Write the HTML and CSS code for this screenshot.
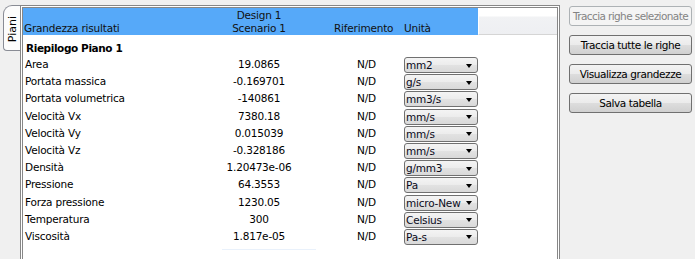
FILE: index.html
```html
<!DOCTYPE html>
<html>
<head>
    <meta charset="utf-8">
    <title>Risultati piani</title>
    <link rel="stylesheet" href="styles.css">
</head>
<body>
    <div class="window">
        <div class="side-tabs">
            <div class="tab"><span>Piani</span></div>
        </div>

        <div class="frame">
            <div class="head">
                <div class="hcell name">Grandezza risultati</div>
                <div class="hcell val">Design 1<br>Scenario 1</div>
                <div class="hcell ref">Riferimento</div>
                <div class="hcell unit">Unità</div>
                <div class="hcell extra"></div>
            </div>

            <div class="group">Riepilogo Piano 1</div>

            <div class="row"><span class="name">Area</span><span class="val">19.0865</span><span class="ref">N/D</span><span class="unit"><span class="combo"><span class="label">mm2</span><i class="arrow"></i></span></span></div>
            <div class="row"><span class="name">Portata massica</span><span class="val">-0.169701</span><span class="ref">N/D</span><span class="unit"><span class="combo"><span class="label">g/s</span><i class="arrow"></i></span></span></div>
            <div class="row"><span class="name">Portata volumetrica</span><span class="val">-140861</span><span class="ref">N/D</span><span class="unit"><span class="combo"><span class="label">mm3/s</span><i class="arrow"></i></span></span></div>
            <div class="row"><span class="name">Velocità Vx</span><span class="val">7380.18</span><span class="ref">N/D</span><span class="unit"><span class="combo"><span class="label">mm/s</span><i class="arrow"></i></span></span></div>
            <div class="row"><span class="name">Velocità Vy</span><span class="val">0.015039</span><span class="ref">N/D</span><span class="unit"><span class="combo"><span class="label">mm/s</span><i class="arrow"></i></span></span></div>
            <div class="row"><span class="name">Velocità Vz</span><span class="val">-0.328186</span><span class="ref">N/D</span><span class="unit"><span class="combo"><span class="label">mm/s</span><i class="arrow"></i></span></span></div>
            <div class="row"><span class="name">Densità</span><span class="val">1.20473e-06</span><span class="ref">N/D</span><span class="unit"><span class="combo"><span class="label">g/mm3</span><i class="arrow"></i></span></span></div>
            <div class="row"><span class="name">Pressione</span><span class="val">64.3553</span><span class="ref">N/D</span><span class="unit"><span class="combo"><span class="label">Pa</span><i class="arrow"></i></span></span></div>
            <div class="row"><span class="name">Forza pressione</span><span class="val">1230.05</span><span class="ref">N/D</span><span class="unit"><span class="combo"><span class="label">micro-New</span><i class="arrow"></i></span></span></div>
            <div class="row"><span class="name">Temperatura</span><span class="val">300</span><span class="ref">N/D</span><span class="unit"><span class="combo"><span class="label">Celsius</span><i class="arrow"></i></span></span></div>
            <div class="row"><span class="name">Viscosità</span><span class="val">1.817e-05</span><span class="ref">N/D</span><span class="unit"><span class="combo"><span class="label">Pa-s</span><i class="arrow"></i></span></span></div>

            <div class="foot-line"></div>
        </div>

        <div class="actions">
            <button class="btn" disabled>Traccia righe selezionate</button>
            <button class="btn">Traccia tutte le righe</button>
            <button class="btn">Visualizza grandezze</button>
            <button class="btn">Salva tabella</button>
        </div>
    </div>
</body>
</html>
```

FILE: styles.css
```css
body {
    margin: 0;
    padding: 0;
    background-color: #f0f0f0;
    font-family: "DejaVu Sans", "Liberation Sans", sans-serif;
    font-size: 10.5px;
    letter-spacing: -0.2px;
    color: #000;
    overflow: hidden;
}
.window {
    display: flex;
    align-items: flex-start;
    padding-top: 5px;
    height: 254px;
}

/* vertical tab on the left */
.side-tabs {
    width: 17px;
    padding-left: 3px;
}
.tab {
    height: 44px;
    margin-top: 0;
    border: 1px solid #898c95;
    border-right: none;
    border-radius: 9px 0 0 4px;
    background: #fcfcfc;
    display: flex;
    justify-content: center;
    align-items: center;
}
.tab span {
    writing-mode: vertical-rl;
    transform: rotate(180deg);
    font-size: 11px;
    letter-spacing: 0;
    padding-bottom: 3px;
}

/* table frame */
.frame {
    width: 534px;
    height: 260px;
    border: 3px double #878787;
    border-bottom: none;
    background: #fff;
}
.head,
.row {
    display: grid;
    grid-template-columns: 197px 78px 102px 78px 79px;
}
.head {
    height: 27px;
}
.hcell {
    background: #56a9f9;
    line-height: 13px;
    padding-top: 1px;
    color: #111;
}
.hcell.name {
    padding-left: 1px;
    padding-top: 14px;
}
.hcell.val {
    text-align: center;
}
.hcell.ref {
    padding-left: 36px;
    padding-top: 14px;
}
.hcell.unit {
    padding-left: 4px;
    padding-top: 14px;
}
.hcell.extra {
    height: 25px;
    border-left: 1px solid #fff;
    border-bottom: 1px solid #d5d5d5;
    background: linear-gradient(#fff 0, #fff 8px, #f1f2f4 9px, #eeeff2 100%);
}

.group {
    margin-top: 6px;
    height: 15px;
    line-height: 15px;
    padding-left: 3px;
    font-weight: bold;
    letter-spacing: -0.4px;
}
.row {
    height: 17.2px;
    line-height: 17px;
}
.row .name {
    padding-left: 2px;
}
.row .val {
    text-align: center;
}
.row .ref {
    padding-left: 59px;
}
.row .unit {
    padding-left: 4px;
}

/* drop-down list */
.combo {
    display: flex;
    align-items: center;
    box-sizing: border-box;
    width: 74px;
    height: 16px;
    margin-top: 1px;
    border: 1px solid #707070;
    border-radius: 3px;
    background: linear-gradient(#f4f4f4 0%, #ececec 50%, #e2e2e2 51%, #d9d9d9 100%);
    line-height: 14px;
}
.combo .label {
    flex: 1;
    overflow: hidden;
    white-space: nowrap;
    padding-left: 1px;
    color: #0a0a1a;
}
.combo .arrow {
    width: 0;
    height: 0;
    margin: 1px 5px 0 3px;
    border-left: 3.5px solid transparent;
    border-right: 3.5px solid transparent;
    border-top: 4px solid #000;
}

.foot-line {
    margin: 4px 0 0 199px;
    width: 94px;
    height: 1px;
    background: #e9f1fb;
}

/* buttons column */
.actions {
    display: flex;
    flex-direction: column;
    gap: 9px;
    margin: 1px 0 0 9px;
}
.btn {
    width: 123px;
    height: 20px;
    padding: 0;
    border: 1px solid #707070;
    border-radius: 3px;
    background: linear-gradient(#f3f3f3 0%, #ebebeb 50%, #dddddd 51%, #d0d0d0 100%);
    font-family: inherit;
    font-size: 10.5px;
    letter-spacing: -0.4px;
    color: #000;
    white-space: nowrap;
}
.btn:disabled {
    border-color: #adb2b5;
    background: #f4f4f4;
    color: #838383;
    letter-spacing: -0.6px;
}
```
